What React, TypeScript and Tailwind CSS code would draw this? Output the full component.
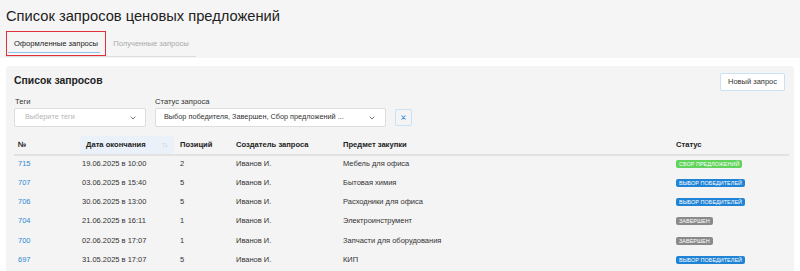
import React from 'react';

type Status = 'collect' | 'winner' | 'done';

interface Row {
  id: string;
  date: string;
  positions: number;
  author: string;
  subject: string;
  status: Status;
}

const rows: Row[] = [
  { id: '715', date: '19.06.2025 в 10:00', positions: 2, author: 'Иванов И.', subject: 'Мебель для офиса', status: 'collect' },
  { id: '707', date: '03.06.2025 в 15:40', positions: 5, author: 'Иванов И.', subject: 'Бытовая химия', status: 'winner' },
  { id: '706', date: '30.06.2025 в 13:00', positions: 5, author: 'Иванов И.', subject: 'Расходники для офиса', status: 'winner' },
  { id: '704', date: '21.06.2025 в 16:11', positions: 1, author: 'Иванов И.', subject: 'Электроинструмент', status: 'done' },
  { id: '700', date: '02.06.2025 в 17:07', positions: 1, author: 'Иванов И.', subject: 'Запчасти для оборудования', status: 'done' },
  { id: '697', date: '31.05.2025 в 17:07', positions: 5, author: 'Иванов И.', subject: 'КИП', status: 'winner' }
];

const StatusBadge: React.FC<{ status: Status }> = ({ status }) => {
  if (status === 'collect') {
    return <span className="inline-block rounded-[2px] bg-[#5fd35a] px-[3px] text-[5.5px] leading-[8px] text-white">СБОР ПРЕДЛОЖЕНИЙ</span>;
  }
  if (status === 'winner') {
    return <span className="inline-block rounded-[2px] bg-[#1f83d6] px-[3px] text-[5.5px] leading-[8px] text-white">ВЫБОР ПОБЕДИТЕЛЕЙ</span>;
  }
  return <span className="inline-block rounded-[2px] bg-[#8a8a8a] px-[3px] text-[5.5px] leading-[8px] text-white">ЗАВЕРШЕН</span>;
};

const Chevron = () => (
  <svg width="8" height="8" viewBox="0 0 24 24" fill="none" stroke="#777" strokeWidth="3" strokeLinecap="round" strokeLinejoin="round">
    <path d="M6 9l6 6 6-6" />
  </svg>
);

const cols = 'grid grid-cols-[66px_94px_56px_107px_333px_1fr]';

const App: React.FC = () => {
  return <div className="w-[800px] h-[271px] overflow-hidden bg-white text-[#333] font-['Liberation_Sans',Arial,sans-serif]">
      <div className="bg-[#f5f5f5] px-[6px] pt-[5px] h-[58px]">
        <h1 className="text-[14.7px] leading-[22px] text-[#222]">Список запросов ценовых предложений</h1>
        <div className="mt-[4px] flex">
          <div className="relative border-b border-[#ddd] flex">
            <div className="relative h-[25px] w-[100px] border-[1.5px] border-[#e0303a] flex items-center justify-center">
              <span className="text-[7.6px] text-[#222]">Оформленные запросы</span>
              <span className="absolute left-[1px] right-[5px] bottom-[2px] h-[1.5px] bg-[#8cc4ee]"></span>
            </div>
            <div className="h-[25px] w-[90px] flex items-center justify-center">
              <span className="text-[7.6px] text-[#aaa]">Полученные запросы</span>
            </div>
          </div>
        </div>
      </div>
      <div className="mx-[6px] mt-[8px] rounded-[4px] bg-[#f4f4f4] px-[8px] pt-[7px] h-[220px]">
        <div className="flex items-start justify-between">
          <h2 className="mt-[1px] text-[10.4px] leading-[14px] font-bold text-[#222]">Список запросов</h2>
          <button className="h-[18px] w-[65px] rounded-[2px] border border-[#c9e2f6] bg-white text-[7.5px] text-[#333] mr-[1px]">Новый запрос</button>
        </div>
        <div className="mt-[6px] flex items-end gap-[9px]">
          <div>
            <div className="text-[7.6px] leading-[10px] ml-[1px]">Теги</div>
            <div className="mt-[1px] h-[19px] w-[132px] rounded-[2px] border border-[#ddd] bg-white flex items-center justify-between pl-[10px] pr-[8px]">
              <span className="text-[7.3px] text-[#b5b5b5]">Выберите теги</span>
              <Chevron />
            </div>
          </div>
          <div>
            <div className="text-[7.6px] leading-[10px]">Статус запроса</div>
            <div className="mt-[1px] h-[19px] w-[231px] rounded-[2px] border border-[#ddd] bg-white flex items-center justify-between pl-[8px] pr-[9px]">
              <span className="text-[7.3px] text-[#333]">Выбор победителя, Завершен, Сбор предложений ...</span>
              <Chevron />
            </div>
          </div>
          <button className="h-[17px] w-[17px] rounded-[2px] border border-[#c9e2f6] bg-transparent flex items-center justify-center mb-[1px]">
            <svg width="7" height="7" viewBox="0 0 24 24" fill="none" stroke="#3a8ed6" strokeWidth="3.5" strokeLinecap="round">
              <path d="M6 6l12 12M18 6L6 18" />
            </svg>
          </button>
        </div>
        <div className="mt-[9px] mr-[-3px]">
          <div className={`${cols} h-[20px] border-b-2 border-[#e2e2e2] text-[7.6px] font-bold text-[#222]`}>
            <div className="flex items-center pl-[4px]">№</div>
            <div className="flex items-center justify-between bg-[#eaf1f8] pl-[6px] pr-[7px]">
              <span>Дата окончания</span>
              <span className="font-normal text-[#bbb] text-[7px] tracking-[-1px]">↑↓</span>
            </div>
            <div className="flex items-center pl-[6px]">Позиций</div>
            <div className="flex items-center pl-[6px]">Создатель запроса</div>
            <div className="flex items-center pl-[6px]">Предмет закупки</div>
            <div className="flex items-center pl-[6px]">Статус</div>
          </div>
          {rows.map(r => <div key={r.id} className={`${cols} h-[19.3px] text-[7.5px] leading-[9px] pt-[2.5px]`}>
              <div className="pl-[4px] text-[#2b8ad6]">{r.id}</div>
              <div className="pl-[2px]">{r.date}</div>
              <div className="pl-[6px]">{r.positions}</div>
              <div className="pl-[6px]">{r.author}</div>
              <div className="pl-[6px]">{r.subject}</div>
              <div className="pl-[6px]"><StatusBadge status={r.status} /></div>
            </div>)}
        </div>
      </div>
    </div>;
};

export default App;
